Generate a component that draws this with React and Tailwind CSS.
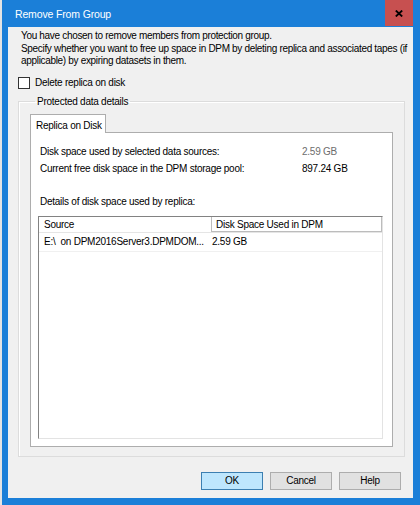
export default function App() {
  return (
    <div className="w-[420px] h-[505px] bg-[#e4e4e4] flex pl-[2px] font-['Liberation_Sans',Arial,sans-serif] text-[10px] tracking-[-0.25px] text-black">
      <div className="flex-1 flex flex-col bg-[#1b7fd8]">
        {/* title bar */}
        <div className="h-[27px] flex items-start shrink-0">
          <span className="ml-[13px] mt-[7px] text-white text-[10.5px] tracking-[-0.15px] leading-[14px]">Remove From Group</span>
          <button className="ml-auto mr-[7px] w-[28px] h-[26px] bg-[#c75050] flex items-center justify-center">
            <svg width="8" height="7" viewBox="0 0 8 7">
              <path d="M0.8 0.5 L7.2 6.5 M7.2 0.5 L0.8 6.5" stroke="#000" strokeWidth="1.8" />
            </svg>
          </button>
        </div>

        <div className="flex-1 ml-[6px] mr-[7px] mb-[7px] bg-[#f0f0f0] flex flex-col">
          <p className="mt-[3px] ml-[13px] w-[392px] leading-[12.5px] tracking-[-0.32px]">
            You have chosen to remove members from protection group.
            <br />
            Specify whether you want to free up space in DPM by deleting replica and associated tapes (if applicable) by expiring datasets in them.
          </p>

          <label className="mt-[9px] ml-[10px] flex items-center h-[12px]">
            <span className="w-[12px] h-[12px] border border-[#333333] bg-white"></span>
            <span className="ml-[5px]">Delete replica on disk</span>
          </label>

          <fieldset className="mt-[6px] ml-[10px] w-[386px] h-[362px] border border-[#dcdcdc] shadow-[inset_1px_1px_0_#ffffff] px-[11px]">
            <legend className="ml-[5px] px-[2px] leading-[13px]">Protected data details</legend>

            <div className="mt-[6px] flex flex-col">
              <div className="relative z-10 -mb-px w-[76px] h-[19px] bg-white border border-b-0 border-[#adadad] pl-[5px] pt-[3px] whitespace-nowrap">
                Replica on Disk
              </div>
              <div className="w-[363px] h-[315px] bg-white border border-[#adadad] pl-[9px] pt-[12px] flex flex-col">
                <div className="flex leading-[13px]">
                  <span className="w-[262px]">Disk space used by selected data sources:</span>
                  <span className="text-[#6d6d6d]">2.59 GB</span>
                </div>
                <div className="flex leading-[13px] mt-[4px]">
                  <span className="w-[262px]">Current free disk space in the DPM storage pool:</span>
                  <span>897.24 GB</span>
                </div>
                <div className="mt-[20px] leading-[13px]">Details of disk space used by replica:</div>

                <div className="mt-[8px] -ml-[2px] w-[345px] h-[223px] border border-t-[#828282] border-l-[#828282] border-r-[#e3e3e3] border-b-[#e3e3e3] bg-white flex flex-col">
                  <div className="flex h-[16px] border-b border-[#e5e5e5] leading-[15px]">
                    <div className="w-[172px] pl-[5px]">Source</div>
                    <div className="w-[171px] pl-[4px] border border-t-0 border-[#bcbcbc]">Disk Space Used in DPM</div>
                  </div>
                  <div className="flex h-[19px] items-center border-b border-[#f0f0f0]">
                    <div className="w-[173px] pl-[5px] whitespace-nowrap overflow-hidden">E:\&nbsp; on DPM2016Server3.DPMDOM...</div>
                    <div>2.59 GB</div>
                  </div>
                </div>
              </div>
            </div>
          </fieldset>

          <div className="mt-[15px] mr-[12px] flex justify-end gap-[7px]">
            <button className="w-[62px] h-[18px] bg-[#bee6fd] border border-[#3c7fb1] leading-[16px]">OK</button>
            <button className="w-[62px] h-[18px] bg-[#e1e1e1] border border-[#adadad] leading-[16px]">Cancel</button>
            <button className="w-[62px] h-[18px] bg-[#e1e1e1] border border-[#adadad] leading-[16px]">Help</button>
          </div>
        </div>
      </div>
    </div>
  );
}
